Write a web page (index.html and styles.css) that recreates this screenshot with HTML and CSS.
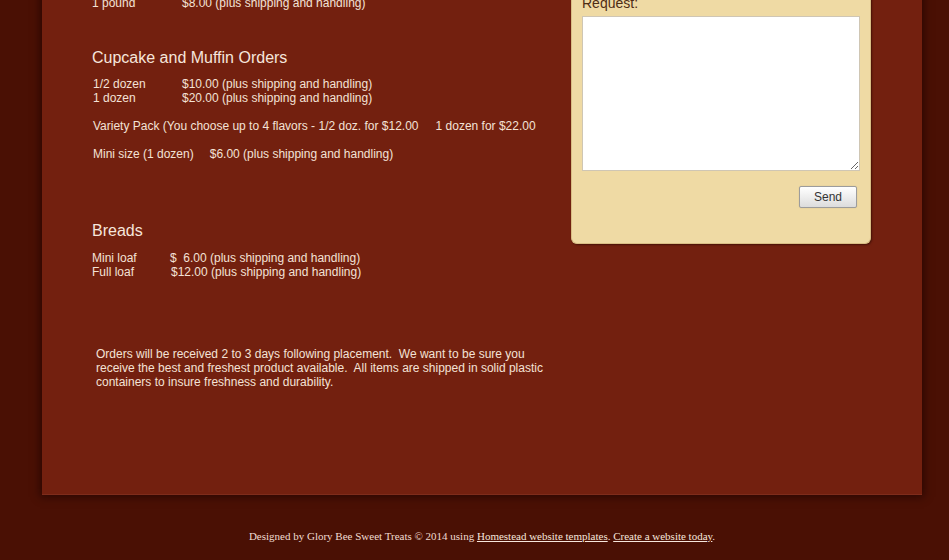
FILE: index.html
```html
<!DOCTYPE html>
<html>
<head>
<meta charset="utf-8">
<link rel="stylesheet" href="styles.css">
</head>
<body>
<div class="wrap">
  <div class="panel">
    <div class="left">
      <div class="row first"><span class="c1 c1a">1 pound</span><span>$8.00 (plus shipping and handling)</span></div>

      <h2 class="h h-cup">Cupcake and Muffin Orders</h2>
      <div class="block cup">
        <div class="row"><span class="c1">1/2 dozen</span><span>$10.00 (plus shipping and handling)</span></div>
        <div class="row"><span class="c1">1 dozen</span><span>$20.00 (plus shipping and handling)</span></div>
        <div class="row blank"></div>
        <div class="row">Variety Pack (You choose up to 4 flavors - 1/2 doz. for $12.00<span class="gap1"></span>1 dozen for $22.00</div>
        <div class="row blank"></div>
        <div class="row">Mini size (1 dozen)<span class="gap2"></span>$6.00 (plus shipping and handling)</div>
      </div>

      <h2 class="h h-bread">Breads</h2>
      <div class="block bread">
        <div class="row"><span class="c2">Mini loaf</span><span>$&nbsp; 6.00 (plus shipping and handling)</span></div>
        <div class="row"><span class="c2 c2b">Full loaf</span><span>$12.00 (plus shipping and handling)</span></div>
      </div>

      <p class="note">Orders will be received 2 to 3 days following placement.&nbsp; We want to be sure you receive the best and freshest product available.&nbsp; All items are shipped in solid plastic containers to insure freshness and durability.</p>
    </div>

    <div class="right">
      <div class="form">
        <label class="lbl">Request:</label>
        <textarea class="ta"></textarea>
        <div class="actions"><button class="send">Send</button></div>
      </div>
    </div>
  </div>

  <div class="footer">Designed by Glory Bee Sweet Treats © 2014 using <a href="#">Homestead website templates</a>. <a href="#">Create a website today</a>.</div>
</div>
</body>
</html>
```

FILE: styles.css
```css
html, body {
  margin: 0;
  padding: 0;
  background: #4a1004;
  overflow: hidden;
}
.wrap {
  width: 880px;
  margin-left: 42px;
  margin-top: -20px;
}
.panel {
  display: flex;
  align-items: flex-start;
  background: #73200f;
  border-bottom: 1px solid #7f2c1b;
  box-shadow: 0 0 8px 2px rgba(30, 4, 0, 0.7);
  height: 515px;
  box-sizing: border-box;
  font-family: "Liberation Sans", Arial, sans-serif;
  font-size: 12px;
  line-height: 14px;
  color: #f3e2d6;
}
.left {
  width: 460px;
  margin-left: 50px;
  padding-top: 16px;
}
.row {
  display: flex;
  height: 14px;
  white-space: nowrap;
}
.c1 { width: 89px; }
.c1a { width: 90px; }
.c2 { width: 78px; }
.c2b { width: 79px; }
.gap1 { display: inline-block; width: 17px; }
.gap2 { display: inline-block; width: 16px; }
.h {
  margin: 0;
  font-weight: normal;
  font-size: 16px;
  line-height: 19px;
  color: #f6e6dc;
}
.h-cup { margin-top: 38px; }
.cup { margin-top: 10px; padding-left: 1px; }
.h-bread { margin-top: 60px; }
.bread { margin-top: 11px; }
.note {
  margin: 68px 0 0 0;
  padding-left: 4px;
  width: 450px;
}
.right {
  width: 300px;
  margin-left: 19px;
  margin-top: -20px;
}
.form {
  background: #efdaa4;
  border: 1px solid #d9bd84;
  border-top: none;
  border-radius: 0 0 6px 6px;
  box-shadow: 1px 1px 2px rgba(40, 6, 0, 0.6);
  padding: 35px 10px 35px 10px;
  box-sizing: border-box;
  width: 300px;
}
.lbl {
  display: block;
  font-family: "Liberation Sans", Arial, sans-serif;
  font-size: 14px;
  line-height: 16px;
  color: #4e2d14;
}
.ta {
  display: block;
  margin-top: 5px;
  width: 278px;
  height: 155px;
  box-sizing: border-box;
  border: 1px solid #cfc6b4;
  background: #fff;
  padding: 2px;
  resize: both;
}
.actions {
  display: flex;
  justify-content: flex-end;
  margin-top: 15px;
  padding-right: 3px;
}
.send {
  width: 58px;
  height: 22px;
  box-sizing: border-box;
  border: 1px solid #9c9c9c;
  border-radius: 2px;
  background: linear-gradient(#ffffff, #dcdcdc);
  font-family: "Liberation Sans", Arial, sans-serif;
  font-size: 12px;
  color: #333;
  padding: 0;
  box-shadow: 0 0 1px rgba(0,0,0,0.2);
}
.footer {
  text-align: center;
  font-family: "Liberation Serif", "Times New Roman", serif;
  font-size: 11px;
  line-height: 14px;
  color: #f0dcd2;
  margin-top: 34px;
}
.footer a {
  color: #f6e6dc;
  text-decoration: underline;
}
```
